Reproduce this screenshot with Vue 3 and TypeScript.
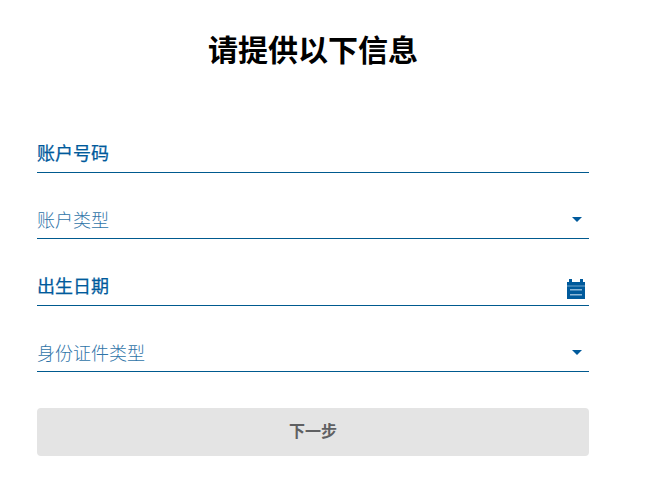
<script setup lang="ts">
const fields = [
  { label: '账户号码', active: true, icon: '' },
  { label: '账户类型', active: false, icon: 'caret' },
  { label: '出生日期', active: true, icon: 'calendar' },
  { label: '身份证件类型', active: false, icon: 'caret' },
]
</script>

<template>
  <div class="page">
    <h1 class="title">请提供以下信息</h1>

    <form class="form" @submit.prevent>
      <div v-for="field in fields" :key="field.label" class="field" :class="{ active: field.active }">
        <span class="label">{{ field.label }}</span>
        <svg v-if="field.icon === 'caret'" class="caret" width="10" height="5" viewBox="0 0 10 5">
          <path d="M0 0h10L5 5z" fill="#005a9c" />
        </svg>
        <svg v-if="field.icon === 'calendar'" class="calendar" width="18" height="20" viewBox="0 0 18 20">
          <path d="M2 0h3v3H2zM13 0h3v3h-3zM0 3h18v17H0z" fill="#005a9c" />
          <path d="M0 6.6h18v.8H0z" fill="#8db8d8" />
          <path d="M3 10h12v1.4H3zM3 15h12v1.4H3z" fill="#8db8d8" />
        </svg>
      </div>

      <button class="next" type="button" disabled>下一步</button>
    </form>
  </div>
</template>

<style scoped>
.page {
  width: 646px;
  height: 503px;
  box-sizing: border-box;
  padding: 34px 57px 0 37px;
  font-family: "Liberation Sans", "Noto Sans CJK SC", sans-serif;
}

.title {
  margin: 0;
  font-size: 30px;
  line-height: 34px;
  font-weight: 700;
  color: #000;
  text-align: center;
}

.form {
  display: flex;
  flex-direction: column;
  margin-top: 71px;
}

.field {
  height: 33.33px;
  margin-bottom: 32px;
  border-bottom: 1px solid #005a8f;
  display: flex;
  align-items: flex-end;
  justify-content: space-between;
}

.form .field:first-child {
  height: 33px;
}

.label {
  font-size: 18px;
  line-height: 24px;
  padding-bottom: 5px;
  color: #2f74a8;
  font-weight: 300;
}

.active .label {
  padding-bottom: 6px;
  color: #005a9c;
  font-weight: 400;
  -webkit-text-stroke: 0.25px #005a9c;
}

.caret {
  margin: 0 7px 16px 0;
}

.calendar {
  margin: 0 4px 6px 0;
}

.next {
  height: 48px;
  margin-top: 4px;
  border: 0;
  border-radius: 4px;
  background: #e4e4e4;
  color: #5f6062;
  font-family: inherit;
  font-size: 16px;
  font-weight: 700;
  padding: 0 0 3px;
}
</style>
